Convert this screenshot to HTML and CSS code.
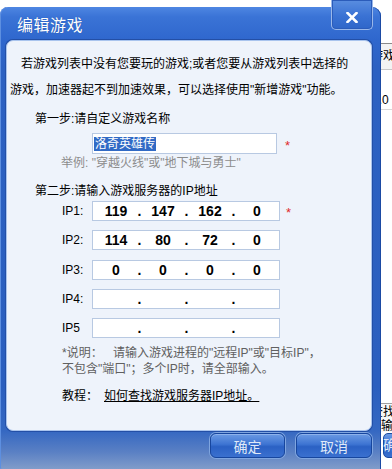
FILE: index.html
```
<!DOCTYPE html>
<html lang="zh-CN">
<head>
<meta charset="utf-8">
<title>编辑游戏</title>
<link rel="stylesheet" href="styles.css">
</head>
<body>
<div class="dialog">
  <div class="titlebar">
    <span class="title">编辑游戏</span>
    <div class="close">
      <svg width="12" height="11" viewBox="0 0 12 11"><path d="M1.5 1 L10.5 10 M10.5 1 L1.5 10" stroke="#fff" stroke-width="2.6" stroke-linecap="square" fill="none"/></svg>
    </div>
  </div>
  <div class="panel">
    <p class="intro">若游戏列表中没有您要玩的游戏;或者您要从游戏列表中选择的<br>游戏，加速器起不到加速效果，可以选择使用"新增游戏"功能。</p>
    <div class="step">第一步:请自定义游戏名称</div>
    <div class="name-row">
      <div class="name-input"><span class="sel">洛奇英雄传</span></div>
      <span class="req">*</span>
    </div>
    <div class="example">举例: "穿越火线"或"地下城与勇士"</div>
    <div class="step step2">第二步:请输入游戏服务器的IP地址</div>
    <div class="ip-list">
      <div class="ip-row">
        <span class="ip-label">IP1:</span>
        <div class="ip-input"><span class="oct">119</span><span class="dot">.</span><span class="oct">147</span><span class="dot">.</span><span class="oct">162</span><span class="dot">.</span><span class="oct">0</span></div>
        <span class="req">*</span>
      </div>
      <div class="ip-row">
        <span class="ip-label">IP2:</span>
        <div class="ip-input"><span class="oct">114</span><span class="dot">.</span><span class="oct">80</span><span class="dot">.</span><span class="oct">72</span><span class="dot">.</span><span class="oct">0</span></div>
      </div>
      <div class="ip-row">
        <span class="ip-label">IP3:</span>
        <div class="ip-input"><span class="oct">0</span><span class="dot">.</span><span class="oct">0</span><span class="dot">.</span><span class="oct">0</span><span class="dot">.</span><span class="oct">0</span></div>
      </div>
      <div class="ip-row">
        <span class="ip-label">IP4:</span>
        <div class="ip-input"><span class="oct"></span><span class="dot">.</span><span class="oct"></span><span class="dot">.</span><span class="oct"></span><span class="dot">.</span><span class="oct"></span></div>
      </div>
      <div class="ip-row">
        <span class="ip-label">IP5</span>
        <div class="ip-input"><span class="oct"></span><span class="dot">.</span><span class="oct"></span><span class="dot">.</span><span class="oct"></span><span class="dot">.</span><span class="oct"></span></div>
      </div>
    </div>
    <div class="note"><span class="note-head">*说明：</span>请输入游戏进程的"远程IP"或"目标IP"，<br>不包含"端口"；多个IP时，请全部输入。</div>
    <div class="tutorial"><span class="tut-label">教程：</span><a class="tut-link" href="#">如何查找游戏服务器IP地址。</a></div>
  </div>
  <div class="footer">
    <div class="btn">确定</div>
    <div class="btn">取消</div>
  </div>
</div>
<div class="behind">
  <div class="b-head"><span class="b-shift">游戏</span></div>
  <div class="b-row"><span class="b-shift2">0.0</span></div>
  <div class="b-fill"></div>
  <div class="b-bottom"><span class="b-shift">查找<br>输入</span></div>
  <div class="b-btn"><span class="b-shift3">确定</span></div>
</div>
</body>
</html>
```
FILE: styles.css
```
* { box-sizing: border-box; }
html, body { margin: 0; padding: 0; }
body {
  width: 392px;
  height: 469px;
  overflow: hidden;
  display: flex;
  background: #ffffff;
  font-family: "Liberation Sans", "Noto Sans CJK SC", sans-serif;
  font-size: 12px;
  color: #000;
}

.dialog {
  flex: none;
  align-self: flex-start;
  position: relative;
  width: 381px;
  height: 466px;
  margin-top: 7px;
  border-radius: 8px 9px 0 6px;
  background: linear-gradient(to bottom, #4e86e2 0px, #3a73d6 10px, #2f67cd 33px, #2c61c2 60px, #2b5fbf 380px, #3568c2 424px, #5a80c4 445px, #8aa3cb 466px);
  box-shadow: inset -1px 0 0 #1b4aa3, inset 1px 0 0 #5d8fe0;
}

.titlebar {
  height: 33px;
  display: flex;
  align-items: flex-end;
  padding: 0 0 5px 17px;
}
.title {
  font-size: 16px;
  line-height: 18px;
  color: #ffffff;
  text-shadow: 0 0 1px #1c4aa5;
  letter-spacing: 0.5px;
}
.close {
  position: absolute;
  top: -7px;
  right: 8px;
  width: 42px;
  height: 30px;
  border: 1px solid #9ab8ea;
  border-top: none;
  border-radius: 0 0 5px 5px;
  background: linear-gradient(to bottom, #5a8ee0, #3a72d4 55%, #2f66c9);
  box-shadow: inset 0 0 0 1px #2b5cba;
  display: flex;
  align-items: center;
  justify-content: center;
  padding-top: 5px;
}

.panel {
  margin-left: 6px;
  width: 366px;
  height: 391px;
  border: 1px solid #a9c4ee;
  border-radius: 7px;
  background: #eef3fb;
  box-shadow: 0 0 0 1px #234fa6;
}

.intro {
  margin: 10px 0 0 3px;
  line-height: 26px;
  text-indent: 11px;
  white-space: nowrap;
}
.step {
  margin: 8px 0 0 28px;
  line-height: 16px;
}
.step2 { margin-top: 12px; }

.name-row {
  margin: 6px 0 0 85px;
  height: 21px;
  display: flex;
  align-items: center;
}
.name-input {
  width: 185px;
  height: 21px;
  border: 1px solid #b8c9e2;
  background: #fff;
  display: flex;
  align-items: center;
  padding-left: 1px;
}
.sel {
  background: #316ac5;
  color: #fff;
  line-height: 14px;
  padding: 0 1px;
}
.req {
  margin-left: 8px;
  color: #e02a2a;
  font-size: 13px;
  line-height: 12px;
  padding-top: 4px;
}
.example {
  margin: 1px 0 0 54px;
  line-height: 16px;
  color: #8c8c8c;
}

.ip-list {
  margin: 2px 0 0 55px;
  display: flex;
  flex-direction: column;
  gap: 9.25px;
}
.ip-row {
  display: flex;
  align-items: center;
  height: 20px;
}
.ip-label {
  width: 30px;
  line-height: 16px;
}
.ip-input {
  width: 188px;
  height: 20px;
  border: 1px solid #b8c9e2;
  background: #fff;
  display: flex;
  align-items: center;
  padding-left: 2px;
  font-weight: bold;
  font-size: 14px;
}
.oct {
  width: 42px;
  text-align: center;
}
.dot {
  width: 5px;
  text-align: center;
}
.ip-row .req { margin-left: 6px; }

.note {
  margin: 7px 0 0 55px;
  line-height: 16px;
  color: #606060;
}
.note-head {
  display: inline-block;
  width: 51px;
}
.tutorial {
  margin: 11px 0 0 55px;
  line-height: 16px;
}
.tut-label {
  display: inline-block;
  width: 42px;
}
.tut-link {
  color: #000;
  text-decoration: underline;
}

.footer {
  height: 38px;
  display: flex;
  justify-content: flex-end;
  gap: 11px;
  padding: 2px 9px 0 0;
}
.btn {
  width: 75px;
  height: 25px;
  border: 1px solid #17469e;
  border-radius: 6px;
  background: linear-gradient(to bottom, #6b9ae4 0%, #3d74d2 45%, #2b61c4 55%, #3a70cf 100%);
  box-shadow: 0 0 0 1px #7fa5df, inset 0 1px 0 #8db2ec;
  color: #dfe9f8;
  font-size: 14px;
  display: flex;
  align-items: center;
  justify-content: center;
}
.btn + .btn { width: 76px; }

.behind {
  flex: none;
  width: 11px;
  height: 469px;
  overflow: hidden;
  display: flex;
  flex-direction: column;
  padding-top: 43px;
  white-space: nowrap;
}
.b-head {
  height: 27px;
  border-top: 1px solid #8a8a8a;
  border-bottom: 1px solid #c8c8c8;
  background: #f3f3f3;
  line-height: 25px;
}
.b-shift { margin-left: -10px; }
.b-row {
  height: 40px;
  border-bottom: 1px solid #d8d8d8;
  line-height: 20px;
  padding-top: 20px;
}
.b-shift2 { margin-left: -9px; }
.b-fill {
  height: 293px;
}
.b-bottom {
  height: 29px;
  border-top: 1px solid #a0a0a0;
  background: #f7f7f7;
  line-height: 14px;
  padding-top: 1px;
}
.b-btn {
  margin: 1px 0 0 2px;
  height: 25px;
  width: 40px;
  border: 1px solid #1b4aa0;
  border-radius: 5px;
  background: linear-gradient(to bottom, #6b9ae4, #3d74d2 45%, #2b61c4 55%, #3a70cf);
  color: #dfe9f8;
  font-size: 14px;
  line-height: 23px;
}
.b-shift3 { margin-left: -1px; }
```
